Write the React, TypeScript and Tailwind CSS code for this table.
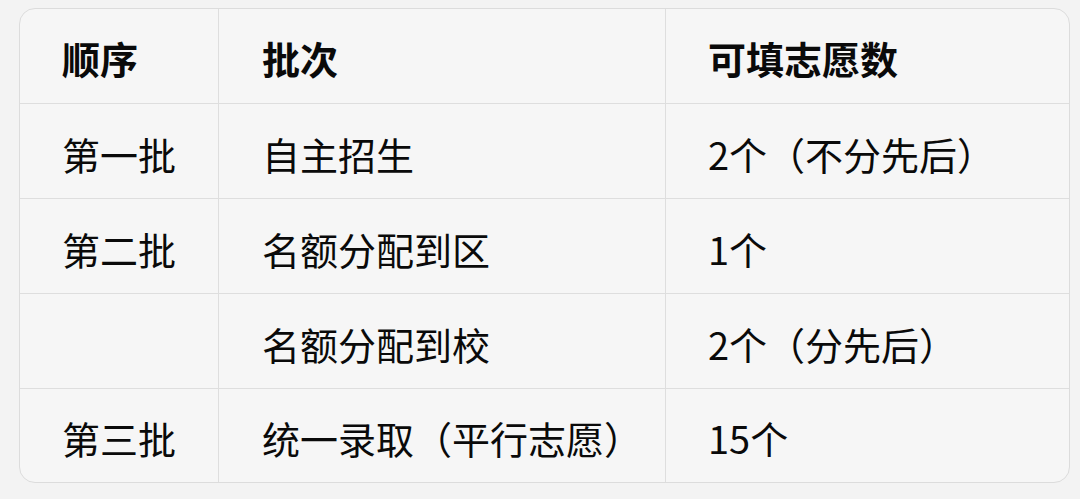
import React from "react";

const rows: [string, string, string][] = [
  ["第一批", "自主招生", "2个（不分先后）"],
  ["第二批", "名额分配到区", "1个"],
  ["", "名额分配到校", "2个（分先后）"],
  ["第三批", "统一录取（平行志愿）", "15个"],
];

const font = {
  fontFamily: '"Noto Sans CJK SC", "Noto Sans", sans-serif',
};

export default function App() {
  return (
    <div
      className="w-[1080px] h-[499px] bg-[#f3f3f3] pt-[8px] pl-[19px]"
      style={font}
    >
      <div className="w-[1051px] h-[475px] bg-[#f6f6f6] border border-[#dcdcdc] rounded-[16px] overflow-hidden flex flex-col text-[38px] text-[#0a0a0a]">
        <div className="flex h-[95px] border-b border-[#dedede] shrink-0">
          <div className="w-[199px] border-r border-[#dedede] flex items-center pl-[42px] pt-[2px] font-bold">
            顺序
          </div>
          <div className="w-[447px] border-r border-[#dedede] flex items-center pl-[43px] pt-[2px] font-bold">
            批次
          </div>
          <div className="flex-1 flex items-center pl-[42px] pt-[2px] font-bold">
            可填志愿数
          </div>
        </div>
        {rows.map((r, i) => (
          <div
            key={i}
            className={
              i < rows.length - 1
                ? "flex h-[95px] border-b border-[#dedede] shrink-0"
                : "flex flex-1"
            }
          >
            <div className="w-[199px] border-r border-[#dedede] flex items-center pl-[42px] pt-[4px]">
              {r[0]}
            </div>
            <div className="w-[447px] border-r border-[#dedede] flex items-center pl-[43px] pt-[4px]">
              {r[1]}
            </div>
            <div className="flex-1 flex items-center pl-[42px] pt-[4px]">
              {r[2]}
            </div>
          </div>
        ))}
      </div>
    </div>
  );
}
